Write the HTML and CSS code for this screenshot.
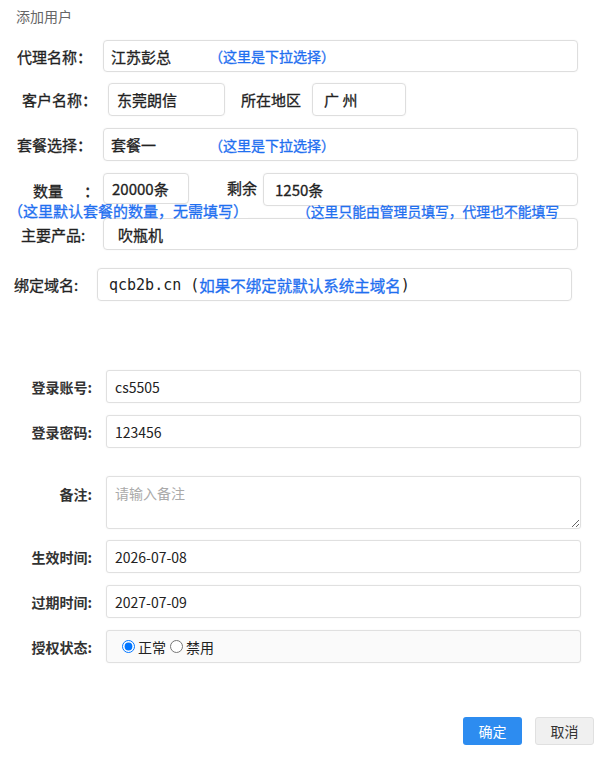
FILE: index.html
```html
<!DOCTYPE html>
<html lang="zh-CN">
<head>
    <meta charset="UTF-8">
    <meta name="viewport" content="width=device-width, initial-scale=1.0">
    <title>添加用户</title>
    <link rel="stylesheet" href="styles.css">
</head>
<body>
<div class="page">
    <div class="title">添加用户</div>

    <div class="row r1">
        <span class="lbl">代理名称：</span>
        <div class="box box-wide">江苏彭总<span class="note note-sel">（这里是下拉选择）</span></div>
    </div>

    <div class="row r2">
        <span class="lbl">客户名称：</span>
        <div class="box box-customer">东莞朗信</div>
        <span class="lbl lbl-area">所在地区</span>
        <div class="box box-area">广 州</div>
    </div>

    <div class="row r3">
        <span class="lbl">套餐选择：</span>
        <div class="box box-wide">套餐一<span class="note note-pkg">（这里是下拉选择）</span></div>
    </div>

    <div class="row r4">
        <span class="lbl lbl-qty">数量<span class="colon">：</span></span>
        <div class="box box-qty">20000条</div>
        <span class="lbl lbl-left">剩余</span>
        <div class="box box-left">1250条</div>
    </div>

    <div class="hints">
        <span class="hint hint-a">（这里默认套餐的数量，无需填写）</span>
        <span class="hint hint-b">（这里只能由管理员填写，代理也不能填写</span>
    </div>

    <div class="row r5">
        <span class="lbl lbl-prod">主要产品:</span>
        <div class="box box-wide box-prod">吹瓶机</div>
    </div>

    <div class="row r6">
        <span class="lbl lbl-domain">绑定域名:</span>
        <div class="box box-domain"><span class="mono">qcb2b.cn (</span><span class="note">如果不绑定就默认系统主域名</span><span class="mono">)</span></div>
    </div>

    <div class="form">
        <div class="frow f-account">
            <label class="flbl">登录账号:</label>
            <input class="finput" type="text" value="cs5505">
        </div>
        <div class="frow f-pass">
            <label class="flbl">登录密码:</label>
            <input class="finput" type="text" value="123456">
        </div>
        <div class="frow f-remark">
            <label class="flbl">备注:</label>
            <textarea class="finput ftext" placeholder="请输入备注"></textarea>
        </div>
        <div class="frow f-start">
            <label class="flbl">生效时间:</label>
            <input class="finput" type="text" value="2026-07-08">
        </div>
        <div class="frow f-end">
            <label class="flbl">过期时间:</label>
            <input class="finput" type="text" value="2027-07-09">
        </div>
        <div class="frow f-state">
            <label class="flbl">授权状态:</label>
            <div class="finput radios">
                <label class="radio"><input type="radio" name="state" checked>正常</label>
                <label class="radio"><input type="radio" name="state">禁用</label>
            </div>
        </div>
    </div>

    <div class="actions">
        <button class="btn btn-ok">确定</button>
        <button class="btn btn-cancel">取消</button>
    </div>
</div>
</body>
</html>
```

FILE: styles.css
```css
* {
    box-sizing: border-box;
}
body {
    margin: 0;
    background: #fff;
    font-family: "Noto Sans CJK SC", "Noto Sans", sans-serif;
    color: #222;
}
.page {
    width: 599px;
    padding-top: 6px;
}
.title {
    padding-left: 16px;
    font-size: 14px;
    line-height: 20px;
    color: #666;
}

/* top block */
.row {
    display: flex;
    align-items: center;
    padding-left: 17px;
}
.lbl {
    font-size: 15px;
    color: #222;
    white-space: nowrap;
    -webkit-text-stroke: 0.3px currentColor;
}
.box {
    height: 32px;
    display: flex;
    align-items: center;
    border: 1px solid #dedede;
    border-radius: 4px;
    box-shadow: 0 0 2px rgba(0, 0, 0, 0.06);
    padding-left: 7px;
    font-size: 15px;
    color: #222;
    white-space: nowrap;
    -webkit-text-stroke: 0.3px currentColor;
}
.note {
    color: #1f6ff0;
}
.note-sel,
.note-pkg {
    font-size: 14px;
}
.note-sel {
    margin-left: 38px;
}
.note-pkg {
    margin-left: 53px;
}
.r1 {
    margin-top: 14px;
}
.r1 .lbl,
.r3 .lbl {
    width: 86px;
}
.box-wide {
    width: 475px;
}
.r2 {
    margin-top: 11px;
    padding-left: 22px;
}
.r2 .lbl {
    width: 86px;
}
.box-customer {
    width: 117px;
    height: 33px;
    padding-left: 8px;
}
.lbl-area {
    width: auto !important;
    margin-left: 16px;
    margin-right: 11px;
}
.box-area {
    width: 94px;
    height: 33px;
    padding-left: 11px;
}
.r3 {
    margin-top: 12px;
}
.r3 .box {
    height: 33px;
}
.r4 {
    margin-top: 12px;
    align-items: flex-start;
    height: 31px;
}
.lbl-qty {
    width: 86px;
    padding-left: 16px;
    padding-top: 9px;
    line-height: 18px;
}
.colon {
    margin-left: 21px;
}
.box-qty {
    width: 86px;
    height: 31px;
    padding-left: 8px;
}
.lbl-left {
    margin-left: 38px;
    margin-right: 6px;
    padding-top: 6px;
    line-height: 18px;
}
.box-left {
    width: 315px;
    height: 33px;
    padding-left: 11px;
}
.hints {
    position: relative;
    z-index: 1;
    display: flex;
    height: 14px;
    color: #1f6ff0;
    white-space: nowrap;
}
.hint {
    display: inline-block;
    height: 14px;
    line-height: 14px;
    background: #fff;
    -webkit-text-stroke: 0.3px currentColor;
}
.hint-a {
    margin-left: 8px;
    font-size: 15px;
}
.hint-b {
    margin-left: 49px;
    font-size: 13.8px;
    background: transparent;
}
.lbl-prod {
    width: 86px;
    padding-left: 4px;
}
.box-prod {
    padding-left: 14px;
}
.r6 {
    margin-top: 18px;
    padding-left: 14px;
}
.lbl-domain {
    width: 83px;
}
.box-domain {
    width: 475px;
    height: 33px;
    padding-left: 11px;
    -webkit-text-stroke: 0;
}
.mono {
    font-family: "DejaVu Sans Mono", monospace;
    font-size: 15px;
}
.box-domain .note {
    font-size: 15.5px;
    -webkit-text-stroke: 0.3px currentColor;
}

/* lower form */
.form {
    margin-top: 69px;
}
.frow {
    display: flex;
    align-items: center;
    margin-top: 12px;
}
.frow:first-child {
    margin-top: 0;
}
.flbl {
    width: 92px;
    text-align: right;
    font-size: 14px;
    font-weight: bold;
    color: #333;
    margin-right: 14px;
}
.finput {
    width: 475px;
    height: 33px;
    border: 1px solid #e0e0e0;
    border-radius: 3px;
    box-shadow: 0 0 2px rgba(0, 0, 0, 0.05);
    padding: 0 8px;
    font-family: "Noto Sans CJK SC", sans-serif;
    font-size: 14px;
    color: #222;
    outline: none;
    background: #fff;
}
.ftext {
    height: 53px;
    padding-top: 6px;
    resize: vertical;
}
.ftext::placeholder {
    color: #aaa;
}
.f-remark {
    margin-top: 28px;
    align-items: flex-start;
}
.f-remark .flbl {
    margin-top: 8px;
}
.f-start {
    margin-top: 11px;
}
.radios {
    display: flex;
    align-items: center;
    padding-left: 15px;
    background: #fafafa;
}
.radio {
    display: flex;
    align-items: center;
    font-size: 14px;
}
.radio input {
    margin: 0 3px 0 0;
    width: 13px;
    height: 13px;
}
.radio + .radio input {
    margin-left: 4px;
}

.actions {
    display: flex;
    justify-content: flex-end;
    gap: 13px;
    margin-top: 54px;
    padding-right: 5px;
}
.btn {
    width: 59px;
    height: 28px;
    border-radius: 3px;
    font-family: "Noto Sans CJK SC", sans-serif;
    font-size: 14px;
    cursor: pointer;
}
.btn-ok {
    background: #2d8cf0;
    color: #fff;
    border: none;
}
.btn-cancel {
    background: #f0f0f0;
    color: #333;
    border: 1px solid #e0e0e0;
}
```
